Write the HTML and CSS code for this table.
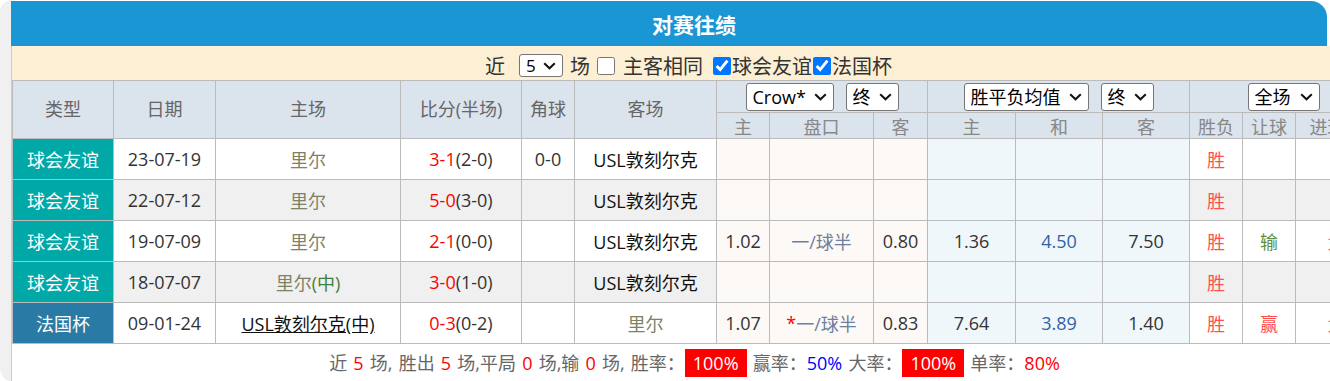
FILE: index.html
```html
<!DOCTYPE html>
<html lang="zh-CN">
<head>
<meta charset="utf-8">
<title>对赛往绩</title>
<link rel="stylesheet" href="styles.css">
</head>
<body>
<div class="page">
  <div class="board">
    <div class="title">对赛往绩</div>
    <div class="main">
      <div class="filter">
        <span class="lbl">近</span>
        <span class="pick pick-n"><select class="sel sel-n"><option>5</option></select><svg class="chev" viewBox="0 0 13 8"><path d="M1.2 1.2 L6.5 6.3 L11.8 1.2" fill="none" stroke="#111" stroke-width="2"/></svg></span>
        <span class="lbl m7">场</span>
        <input type="checkbox" class="cb m7">
        <span class="lbl m8">主客相同</span>
        <input type="checkbox" class="cb m10" checked>
        <span class="lbl m1">球会友谊</span>
        <input type="checkbox" class="cb m1" checked>
        <span class="lbl m1">法国杯</span>
      </div>
      <div class="grid">
        <div class="th r2">类型</div>
        <div class="th r2">日期</div>
        <div class="th r2">主场</div>
        <div class="th r2">比分(半场)</div>
        <div class="th r2">角球</div>
        <div class="th r2">客场</div>
        <div class="th c3 grp">
          <span class="pick"><select class="sel w-crow"><option>Crow*</option></select><svg class="chev" viewBox="0 0 13 8"><path d="M1.2 1.2 L6.5 6.3 L11.8 1.2" fill="none" stroke="#111" stroke-width="2"/></svg></span>
          <span class="pick"><select class="sel w-end"><option>终</option></select><svg class="chev" viewBox="0 0 13 8"><path d="M1.2 1.2 L6.5 6.3 L11.8 1.2" fill="none" stroke="#111" stroke-width="2"/></svg></span>
        </div>
        <div class="th c3 grp">
          <span class="pick"><select class="sel w-avg"><option>胜平负均值</option></select><svg class="chev" viewBox="0 0 13 8"><path d="M1.2 1.2 L6.5 6.3 L11.8 1.2" fill="none" stroke="#111" stroke-width="2"/></svg></span>
          <span class="pick"><select class="sel w-end"><option>终</option></select><svg class="chev" viewBox="0 0 13 8"><path d="M1.2 1.2 L6.5 6.3 L11.8 1.2" fill="none" stroke="#111" stroke-width="2"/></svg></span>
        </div>
        <div class="th c3 grp">
          <span class="pick"><select class="sel w-full"><option>全场</option></select><svg class="chev" viewBox="0 0 13 8"><path d="M1.2 1.2 L6.5 6.3 L11.8 1.2" fill="none" stroke="#111" stroke-width="2"/></svg></span>
        </div>
        <div class="th sub">主</div>
        <div class="th sub">盘口</div>
        <div class="th sub">客</div>
        <div class="th sub">主</div>
        <div class="th sub">和</div>
        <div class="th sub">客</div>
        <div class="th sub">胜负</div>
        <div class="th sub">让球</div>
        <div class="th sub">进球数</div>

        <div class="row">
          <div class="c type">球会友谊</div>
          <div class="c">23-07-19</div>
          <div class="c team">里尔</div>
          <div class="c"><span class="red">3-1</span>(2-0)</div>
          <div class="c">0-0</div>
          <div class="c dark">USL敦刻尔克</div>
          <div class="c o1"></div><div class="c o1"></div><div class="c o1"></div>
          <div class="c o2"></div><div class="c o2"></div><div class="c o2"></div>
          <div class="c win">胜</div>
          <div class="c"></div>
          <div class="c"></div>
        </div>

        <div class="row alt">
          <div class="c type">球会友谊</div>
          <div class="c">22-07-12</div>
          <div class="c team">里尔</div>
          <div class="c"><span class="red">5-0</span>(3-0)</div>
          <div class="c"></div>
          <div class="c dark">USL敦刻尔克</div>
          <div class="c o1"></div><div class="c o1"></div><div class="c o1"></div>
          <div class="c o2"></div><div class="c o2"></div><div class="c o2"></div>
          <div class="c win">胜</div>
          <div class="c"></div>
          <div class="c"></div>
        </div>

        <div class="row">
          <div class="c type">球会友谊</div>
          <div class="c">19-07-09</div>
          <div class="c team">里尔</div>
          <div class="c"><span class="red">2-1</span>(0-0)</div>
          <div class="c"></div>
          <div class="c dark">USL敦刻尔克</div>
          <div class="c o1">1.02</div><div class="c o1 hcap">一/球半</div><div class="c o1">0.80</div>
          <div class="c o2">1.36</div><div class="c o2 blue-n">4.50</div><div class="c o2">7.50</div>
          <div class="c win">胜</div>
          <div class="c lose">输</div>
          <div class="c big">大</div>
        </div>

        <div class="row alt">
          <div class="c type">球会友谊</div>
          <div class="c">18-07-07</div>
          <div class="c team">里尔<span class="neu">(中)</span></div>
          <div class="c"><span class="red">3-0</span>(1-0)</div>
          <div class="c"></div>
          <div class="c dark">USL敦刻尔克</div>
          <div class="c o1"></div><div class="c o1"></div><div class="c o1"></div>
          <div class="c o2"></div><div class="c o2"></div><div class="c o2"></div>
          <div class="c win">胜</div>
          <div class="c"></div>
          <div class="c"></div>
        </div>

        <div class="row">
          <div class="c type cup">法国杯</div>
          <div class="c">09-01-24</div>
          <div class="c dark"><span class="ul">USL敦刻尔克(中)</span></div>
          <div class="c"><span class="red">0-3</span>(0-2)</div>
          <div class="c"></div>
          <div class="c team">里尔</div>
          <div class="c o1">1.07</div><div class="c o1 hcap"><span class="red">*</span>一/球半</div><div class="c o1">0.83</div>
          <div class="c o2">7.64</div><div class="c o2 blue-n">3.89</div><div class="c o2">1.40</div>
          <div class="c win">胜</div>
          <div class="c win">赢</div>
          <div class="c big">大</div>
        </div>
      </div>
      <div class="footer">
        <p class="stats">近 <span class="red">5</span> 场, 胜出 <span class="red">5</span> 场,平局 <span class="red">0</span> 场,输 <span class="red">0</span> 场, 胜率：<span class="box">100%</span> 赢率：<span class="pure-blue">50%</span> 大率：<span class="box">100%</span> 单率：<span class="red">80%</span></p>
      </div>
    </div>
  </div>
</div>
</body>
</html>
```
FILE: styles.css
```css
html, body {
  margin: 0;
  padding: 0;
  overflow: hidden;
  background: #ffffff;
}

.page {
  display: flex;
  width: 1377px;
  height: 382px;
  padding-left: 11px;
  box-sizing: border-box;
  background: #f0f0f0;
  border-radius: 12px 0 0 14px;
}

.board {
  flex: none;
  width: 1366px;
  display: flex;
  flex-direction: column;
  background: #ffffff;
}

.title {
  width: 1316px;
  height: 45px;
  margin-top: 1px;
  box-sizing: border-box;
  padding-left: 50px;
  background: #1a96d5;
  border-radius: 0 16px 0 0;
  color: #ffffff;
  font: bold 21px "Noto Sans CJK SC", sans-serif;
  display: flex;
  align-items: center;
  justify-content: center;
}

.main {
  flex: 1;
  display: flex;
  flex-direction: column;
  border-left: 1px solid #e3cc9c;
  background: #ffffff;
}

.filter {
  height: 34px;
  box-sizing: border-box;
  padding-top: 5px;
  padding-right: 12px;
  background: #fcefd4;
  display: flex;
  align-items: center;
  justify-content: center;
  font: 20px "Noto Sans CJK SC", sans-serif;
  color: #333333;
}

.lbl { line-height: 24px; }
.m1 { margin-left: 1px; }
.m7 { margin-left: 7px; }
.m8 { margin-left: 8px; }
.m10 { margin-left: 10px; }

.cb {
  width: 18px;
  height: 18px;
  margin-top: 0;
  margin-bottom: 0;
  margin-right: 0;
}

.pick {
  position: relative;
  display: inline-flex;
}
.pick-n { margin-left: 14px; }

.chev {
  position: absolute;
  right: 7px;
  top: 50%;
  width: 13px;
  height: 8px;
  margin-top: -4px;
  pointer-events: none;
}

.sel {
  appearance: none;
  -webkit-appearance: none;
  font: 18px "Open Sans", "Noto Sans CJK SC", sans-serif;
  color: #000000;
  height: 28px;
  border: 1px solid #767676;
  border-radius: 3px;
  background: #ffffff;
  padding: 0 0 0 6px;
  margin: 0;
  box-sizing: border-box;
}
.sel-n {
  width: 44px;
  height: 23px;
  font-size: 17px;
  line-height: 21px;
}
.w-crow { width: 88px; }
.w-end { width: 53px; }
.w-avg { width: 125px; }
.w-full { width: 72px; }

.grid {
  display: grid;
  grid-template-columns: 100px 101px 184px 120px 52px 141px 52px 103px 53px 87px 86px 86px 52px 52px 81px;
  grid-template-rows: 31px 25px repeat(5, 40px);
  gap: 1px;
  padding: 1px 0 1px 1px;
  background: #bbbbbb;
  font: 18px "Open Sans", "Noto Sans CJK SC", sans-serif;
  color: #333333;
}

.th {
  background: #dbe3ed;
  color: #666666;
  display: flex;
  align-items: center;
  justify-content: center;
  white-space: nowrap;
  overflow: hidden;
}
.r2 { grid-row: span 2; padding-bottom: 3px; box-sizing: border-box; }
.c3 { grid-column: span 3; }
.grp { gap: 12px; }
.sub { color: #888888; }

.row { display: contents; }

.c {
  background: #ffffff;
  display: flex;
  align-items: center;
  justify-content: center;
  white-space: nowrap;
  overflow: hidden;
}
.alt > .c { background: #f0f0f0; }
.c.o1 { background: #fdf9f6; }
.c.o2 { background: #eff7fb; }
.c.type { background: #00a8a7; color: #ffffff; }
.c.cup { background: #2a7aa6; }

.team { color: #7d8266; }
.neu { color: #3f7f3f; }
.dark { color: #111111; }
.ul { text-decoration: underline; }
.red { color: #ff0000; }
.hcap { color: #6f7f9f; }
.blue-n { color: #2f63a8; }
.win { color: #ff5050; }
.lose { color: #5f9040; }
.big { color: #ff6a4a; }

.footer {
  flex: 1;
  display: flex;
  align-items: center;
  justify-content: center;
  background: #ffffff;
}
.stats {
  margin: 0;
  font: 18px "Open Sans", "Noto Sans CJK SC", sans-serif;
  color: #666666;
  white-space: nowrap;
  word-spacing: 1.5px;
}
.box {
  display: inline-block;
  background: #ff0000;
  color: #ffffff;
  padding: 0 8px;
  line-height: 28px;
  word-spacing: 0;
}
.pure-blue { color: #0000ff; }
```
